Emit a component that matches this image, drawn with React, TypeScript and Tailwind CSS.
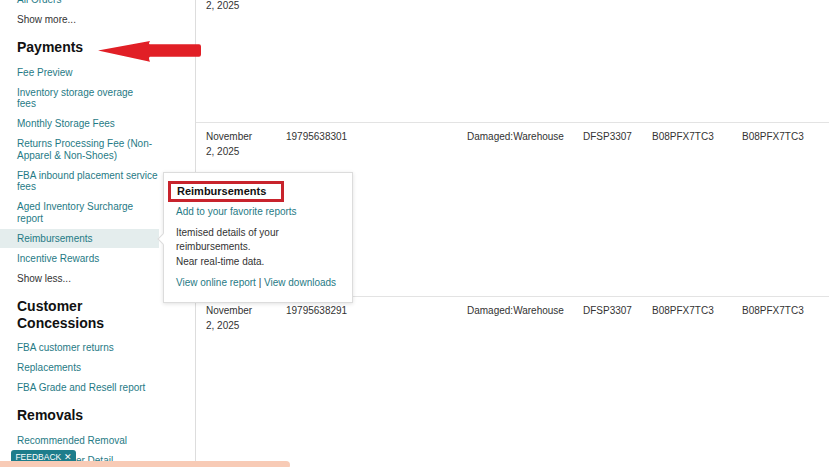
import React from "react";

const link = "text-[#1f7a85]";

function Item({ children, className = "" }: { children: React.ReactNode; className?: string }) {
  return <div className={`text-[10px] leading-[11.5px] mb-[8.5px] ${className}`}>{children}</div>;
}

function Heading({ children }: { children: React.ReactNode }) {
  return (
    <div className="mt-[5px] mb-[10.5px] text-[14px] leading-[17px] font-bold text-[#111]">{children}</div>
  );
}

function Row({
  h,
  pt,
  date2,
  id,
  reason,
  fc,
  asin,
  fnsku,
}: {
  h: string;
  pt: string;
  date2: string;
  id?: string;
  reason?: string;
  fc?: string;
  asin?: string;
  fnsku?: string;
}) {
  return (
    <div className={`${h} shrink-0 border-b border-[#e3e3e3]`}>
      <div
        className={`${pt} grid grid-cols-[80px_181px_116px_69px_90px_1fr] pl-[10px] text-[10px] leading-[14.5px] text-[#333]`}
      >
        <div>
          <div>November</div>
          <div>{date2}</div>
        </div>
        <div>{id}</div>
        <div>{reason}</div>
        <div>{fc}</div>
        <div>{asin}</div>
        <div>{fnsku}</div>
      </div>
    </div>
  );
}

export default function App() {
  return (
    <div className="relative w-[829px] h-[467px] overflow-hidden bg-white flex font-['Liberation_Sans',Arial,sans-serif]">
      {/* Sidebar */}
      <div className="w-[196px] shrink-0 border-r border-[#dddddd] pl-[17px]">
        <div className="-mt-[5.75px] flex flex-col items-start">
          <Item className={link}>All Orders</Item>
          <Item className="text-[#333]">Show more...</Item>

          <Heading>Payments</Heading>
          <Item className={link}>Fee Preview</Item>
          <Item className={link}>
            Inventory storage overage
            <br />
            fees
          </Item>
          <Item className={link}>Monthly Storage Fees</Item>
          <Item className={link}>
            Returns Processing Fee (Non-
            <br />
            Apparel &amp; Non-Shoes)
          </Item>
          <Item className={link}>
            FBA inbound placement service
            <br />
            fees
          </Item>
          <Item className={link}>
            Aged Inventory Surcharge
            <br />
            report
          </Item>
          <div
            className={`text-[10px] leading-[11.5px] -mt-[4px] mb-[4.5px] py-[4px] -ml-[17px] pl-[17px] w-[159px] bg-[#e4eded] ${link}`}
          >
            Reimbursements
          </div>
          <Item className={link}>Incentive Rewards</Item>
          <Item className="text-[#333]">Show less...</Item>

          <Heading>
            Customer
            <br />
            Concessions
          </Heading>
          <Item className={link}>FBA customer returns</Item>
          <Item className={link}>Replacements</Item>
          <Item className={link}>FBA Grade and Resell report</Item>

          <Heading>Removals</Heading>
          <Item className={link}>Recommended Removal</Item>
          <Item className={link}>Removal Order Detail</Item>
        </div>
      </div>

      {/* Main table */}
      <div className="flex-1 flex flex-col">
        <Row h="h-[123px]" pt="-mt-[15.75px]" date2="2, 2025" />
        <Row
          h="h-[174px]"
          pt="pt-[7px]"
          date2="2, 2025"
          id="19795638301"
          reason="Damaged:Warehouse"
          fc="DFSP3307"
          asin="B08PFX7TC3"
          fnsku="B08PFX7TC3"
        />
        <Row
          h="h-[174px]"
          pt="pt-[7px]"
          date2="2, 2025"
          id="19795638291"
          reason="Damaged:Warehouse"
          fc="DFSP3307"
          asin="B08PFX7TC3"
          fnsku="B08PFX7TC3"
        />
      </div>

      {/* Popover */}
      <div className="absolute left-[163px] top-[172px] w-[190px] h-[131px] bg-white border border-[#dcdcdc] shadow-[0_1px_4px_rgba(0,0,0,0.12)] pl-[12px] pt-[8px]">
        <div className="absolute -left-[5px] top-[62px] w-[8px] h-[8px] bg-white border-l border-b border-[#dcdcdc] rotate-45" />
        <div className="-ml-[8px] w-[116px] h-[21px] border-[3px] border-[#c8232c] pl-[6px] text-[11px] leading-[15px] font-bold text-[#111]">
          Reimbursements
        </div>
        <div className={`mt-[3px] text-[10px] leading-[14px] ${link}`}>Add to your favorite reports</div>
        <div className="mt-[6.75px] text-[10px] leading-[14.5px] text-[#333]">
          Itemised details of your
          <br />
          reimbursements.
          <br />
          Near real-time data.
        </div>
        <div className="mt-[6.75px] text-[10px] leading-[14px] text-[#333]">
          <span className={link}>View online report</span> | <span className={link}>View downloads</span>
        </div>
      </div>

      {/* Red annotation arrow */}
      <svg className="absolute left-[96px] top-[38px]" width="108" height="26" viewBox="0 0 108 26">
        <path
          d="M2 12.5 L54 3 Q52 6.5 54 6.3 L103 6.3 Q105 6.3 105 8.5 L105 16.5 Q105 18.7 103 18.7 L54 18.7 Q52 19 54 23.7 Z"
          fill="#e11f26"
        />
      </svg>

      {/* Feedback tab */}
      <div className="absolute left-[11px] top-[450px] w-[65px] h-[14px] rounded-t-[3px] bg-[#1d7d8b] text-white text-[8.5px] leading-[15px] text-center">
        FEEDBACK ✕
      </div>

      {/* Bottom toast strip */}
      <div className="absolute left-0 top-[461px] w-[290px] h-[8px] bg-[#f8cbb6] rounded-r-[4px]" />
    </div>
  );
}
